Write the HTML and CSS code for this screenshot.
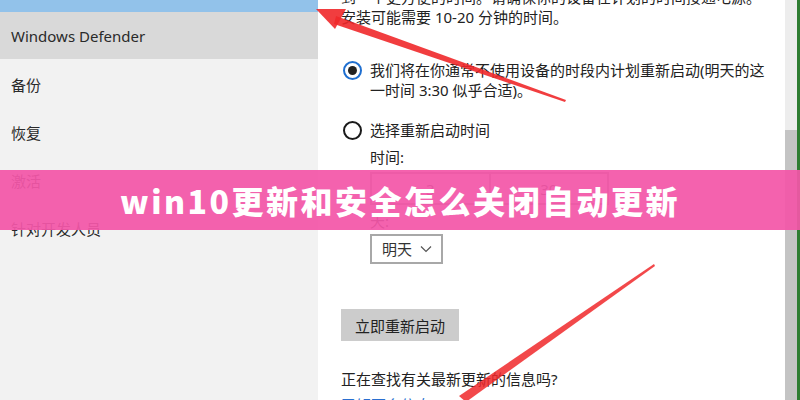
FILE: index.html
```html
<!DOCTYPE html>
<html lang="zh-CN">
<head>
<meta charset="utf-8">
<title>win10更新和安全怎么关闭自动更新</title>
<link rel="stylesheet" href="styles.css">
</head>
<body>
<div class="screen">
  <aside class="sidebar">
    <div class="sidebar-top"></div>
    <div class="nav-item nav-active">Windows Defender</div>
    <div class="nav-item">备份</div>
    <div class="nav-item">恢复</div>
    <div class="nav-item">激活</div>
    <div class="nav-item">针对开发人员</div>
  </aside>
  <main class="panel">
    <p class="intro">到一个更方便的时间。请确保你的设备在计划的时间接通电源。<br>安装可能需要 10-20 分钟的时间。</p>
    <div class="option option-first">
      <span class="radio radio-on"><span class="radio-dot"></span></span>
      <span class="option-text">我们将在你通常不使用设备的时段内计划重新启动(明天的这<br>一时间 3:30 似乎合适)。</span>
    </div>
    <div class="option option-second">
      <span class="radio"></span>
      <span class="option-text">选择重新启动时间</span>
    </div>
    <div class="sub">
      <div class="label">时间:</div>
      <div class="time-box">
        <div class="time-cell">3</div>
        <div class="time-cell">30</div>
      </div>
      <div class="label label-day">天:</div>
      <div class="select">明天
        <svg class="chev" width="12" height="8" viewBox="0 0 12 8"><path d="M1 1.5 L6 6.5 L11 1.5" fill="none" stroke="#555" stroke-width="1.2"/></svg>
      </div>
    </div>
    <button class="restart">立即重新启动</button>
    <p class="question">正在查找有关最新更新的信息吗?</p>
    <p class="link">了解更多信息</p>
  </main>
  <div class="scrollbar"><div class="scroll-thumb"></div></div>
  <div class="edge"></div>

  <svg class="arrows" width="800" height="400" viewBox="0 0 800 400">
    <polygon points="566,100 565,102 334,24 336,16" fill="#f0282a" opacity="0.9"/>
    <polygon points="316,9 346,9 335,29" fill="#f0282a" opacity="0.9"/>
    <polygon points="654,264 655,266 466,402 459,396" fill="#f0282a" opacity="0.85"/>
  </svg>

  <div class="banner">win10更新和安全怎么关闭自动更新</div>
</div>
</body>
</html>
```
FILE: styles.css
```css
html, body {
  margin: 0;
  padding: 0;
}
body {
  width: 800px;
  height: 400px;
  overflow: hidden;
  font-family: "Noto Sans", "Noto Sans CJK SC", sans-serif;
  color: #222;
}
.screen {
  position: relative;
  width: 800px;
  height: 400px;
  display: flex;
  overflow: hidden;
}
.sidebar {
  width: 318px;
  flex: none;
  background: #f2f2f2;
  display: flex;
  flex-direction: column;
}
.sidebar-top {
  height: 12px;
  background: #92c2ea;
}
.nav-item {
  height: 48px;
  padding: 0 11px;
  display: flex;
  align-items: center;
  font-size: 15px;
  color: #2a2a2a;
  padding-top: 2px;
  box-sizing: border-box;
}
.nav-active {
  height: 47px;
  padding-top: 0;
  background: #d9d9d9;
}
.panel {
  width: 467px;
  flex: none;
  background: #fff;
  padding-left: 23px;
  box-sizing: border-box;
  font-size: 15px;
  line-height: 20px;
  font-family: "Noto Sans", "Noto Sans CJK SC", sans-serif;
}
.intro {
  margin: -13px 0 0 0;
  white-space: nowrap;
}
.option {
  display: flex;
  align-items: flex-start;
  white-space: nowrap;
}
.option-first {
  margin-top: 33px;
}
.option-second {
  margin-top: 20px;
}
.radio {
  width: 19px;
  height: 19px;
  box-sizing: border-box;
  border: 2px solid #1a1a1a;
  border-radius: 50%;
  margin: 1px 8px 0 2px;
  display: flex;
  align-items: center;
  justify-content: center;
  flex: none;
}
.radio-on {
  border-color: #1f6fd0;
}
.radio-dot {
  width: 9px;
  height: 9px;
  border-radius: 50%;
  background: #222;
}
.sub {
  padding-left: 29px;
}
.label {
  margin-top: 7px;
}
.label-day {
  margin-top: 6px;
}
.time-box {
  margin-top: 5px;
  width: 239px;
  height: 33px;
  box-sizing: border-box;
  border: 2px solid #a0a0a0;
  display: flex;
}
.time-cell {
  flex: 1;
  display: flex;
  align-items: center;
  justify-content: center;
  color: #333;
}
.time-cell + .time-cell {
  border-left: 2px solid #a0a0a0;
}
.select {
  margin-top: 3px;
  width: 73px;
  height: 30px;
  box-sizing: border-box;
  border: 2px solid #a8a8a8;
  display: flex;
  align-items: center;
  padding-left: 10px;
  gap: 8px;
  color: #333;
}
.chev {
  display: block;
}
.restart {
  display: block;
  margin-top: 45px;
  width: 118px;
  height: 32px;
  border: none;
  background: #cccccc;
  font-family: "Noto Sans CJK SC", sans-serif;
  font-size: 15px;
  color: #222;
  padding: 0;
}
.question {
  margin: 28px 0 0 0;
  white-space: nowrap;
}
.link {
  margin: 6px 0 0 0;
  color: #2a6fd0;
}
.scrollbar {
  width: 12px;
  flex: none;
  background: #ededed;
  display: flex;
  flex-direction: column;
}
.scroll-thumb {
  margin-top: 130px;
  flex: 1;
  background: #c4c4c4;
}
.edge {
  width: 3px;
  flex: none;
  background: #2e7d32;
}
.arrows {
  position: absolute;
  left: 0;
  top: 0;
  pointer-events: none;
}
.banner {
  position: absolute;
  left: 0;
  top: 170px;
  width: 800px;
  height: 60px;
  background: rgba(243, 86, 168, 0.93);
  color: #fff;
  font-family: "Noto Sans CJK SC", sans-serif;
  font-weight: 900;
  font-size: 32px;
  letter-spacing: 2.5px;
  display: flex;
  align-items: center;
  justify-content: center;
}
```
